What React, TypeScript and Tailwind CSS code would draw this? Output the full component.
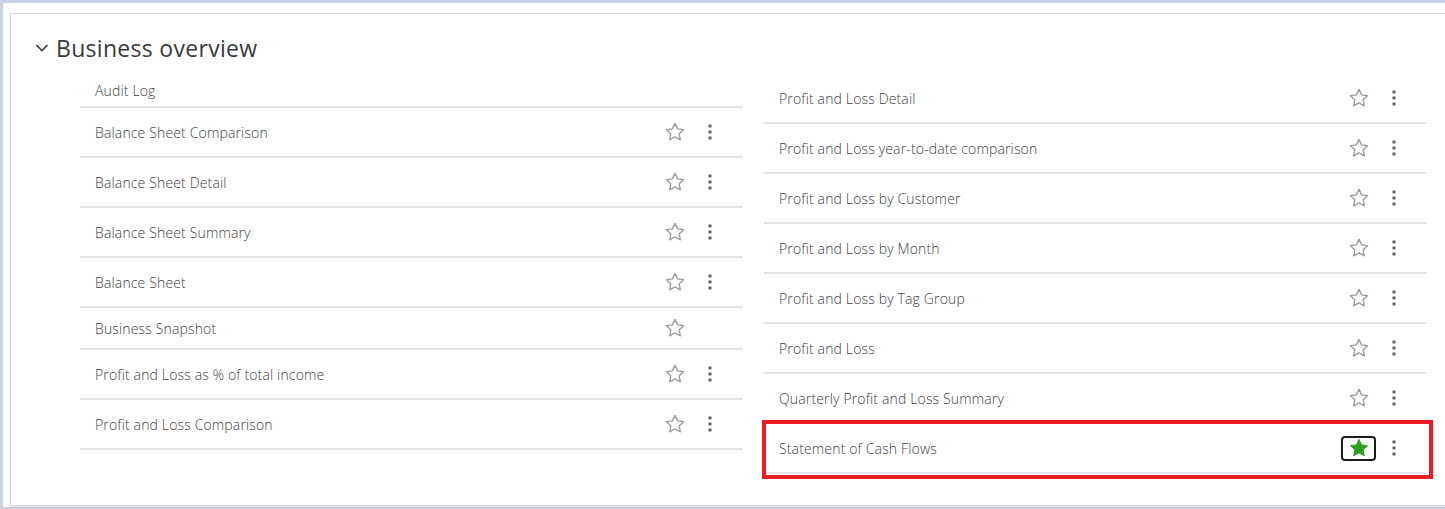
import React from 'react';

type Report = { name: string; star?: boolean; menu?: boolean; favorite?: boolean };

const leftReports: Report[] = [
  { name: 'Audit Log' },
  { name: 'Balance Sheet Comparison', star: true, menu: true },
  { name: 'Balance Sheet Detail', star: true, menu: true },
  { name: 'Balance Sheet Summary', star: true, menu: true },
  { name: 'Balance Sheet', star: true, menu: true },
  { name: 'Business Snapshot', star: true },
  { name: 'Profit and Loss as % of total income', star: true, menu: true },
  { name: 'Profit and Loss Comparison', star: true, menu: true },
];

const rightReports: Report[] = [
  { name: 'Profit and Loss Detail', star: true, menu: true },
  { name: 'Profit and Loss year-to-date comparison', star: true, menu: true },
  { name: 'Profit and Loss by Customer', star: true, menu: true },
  { name: 'Profit and Loss by Month', star: true, menu: true },
  { name: 'Profit and Loss by Tag Group', star: true, menu: true },
  { name: 'Profit and Loss', star: true, menu: true },
  { name: 'Quarterly Profit and Loss Summary', star: true, menu: true },
  { name: 'Statement of Cash Flows', star: true, menu: true, favorite: true },
];

function StarIcon({ filled }: { filled?: boolean }) {
  return (
    <svg width="22" height="22" viewBox="0 0 24 24">
      <path
        d="M12 2.6l2.9 6 6.5.9-4.8 4.5 1.2 6.5L12 17.4l-5.8 3.1 1.2-6.5-4.8-4.5 6.5-.9z"
        fill={filled ? '#2ca01c' : 'none'}
        stroke={filled ? '#2ca01c' : '#9a9ca1'}
        strokeWidth={filled ? 1 : 1.5}
        strokeLinejoin="round"
      />
    </svg>
  );
}

function KebabIcon() {
  return (
    <svg width="6" height="18" viewBox="0 0 6 18">
      <circle cx="3" cy="3" r="1.8" fill="#6b6c72" />
      <circle cx="3" cy="9" r="1.8" fill="#6b6c72" />
      <circle cx="3" cy="15" r="1.8" fill="#6b6c72" />
    </svg>
  );
}

function ReportRow({ report }: { report: Report }) {
  const height = report.menu ? 'h-[50px]' : report.star ? 'h-[42px]' : 'h-[34px]';
  return (
    <div className={`relative flex items-center border-b-2 border-[#e3e5e8] pl-[15px] pr-[16px] ${height}`}>
      <span className="flex-1 text-[14px] font-light text-[#3f4044] tracking-[0.15px]">{report.name}</span>
      {report.star && (
        <>
          <div
            className={`flex items-center justify-center w-[35px] h-[25px] rounded-[4px] ${
              report.favorite ? 'border-2 border-[#1b1b1b]' : ''
            }`}
          >
            <StarIcon filled={report.favorite} />
          </div>
          <div className="w-[35px] flex justify-center">{report.menu && <KebabIcon />}</div>
        </>
      )}
      {report.favorite && (
        <div className="absolute -top-[4px] -left-[2px] -right-[6px] -bottom-[7px] border-4 border-[#ec1c24] pointer-events-none" />
      )}
    </div>
  );
}

export default function App() {
  return (
    <div
      className="w-[1445px] h-[509px] bg-[#c9d3e3] pt-[3px] pl-[3px] overflow-hidden"
      style={{ fontFamily: '"Open Sans", "Noto Sans", sans-serif' }}
    >
      <div className="h-[504px] bg-white pt-[10px] pl-[7px]">
        <div className="w-[1500px] h-[493px] border border-[#d4d7dc] bg-white shadow-[0_1px_2px_rgba(0,0,0,0.15)]">
          <div className="flex items-center h-[48px] pl-[24px] pt-[20px]">
            <svg width="14" height="10" viewBox="0 0 14 10" className="mr-[7px]">
              <path d="M1.5 2l5.5 5.5L12.5 2" fill="none" stroke="#393a3d" strokeWidth="1.6" />
            </svg>
            <h2 className="text-[23px] text-[#393a3d] tracking-[0.3px]">Business overview</h2>
          </div>
          <div className="flex gap-[21px] pl-[69px] pt-[12px]">
            <div className="w-[663px]">
              {leftReports.map((r) => (
                <ReportRow key={r.name} report={r} />
              ))}
            </div>
            <div className="w-[663px]">
              {rightReports.map((r) => (
                <ReportRow key={r.name} report={r} />
              ))}
            </div>
          </div>
        </div>
      </div>
    </div>
  );
}
